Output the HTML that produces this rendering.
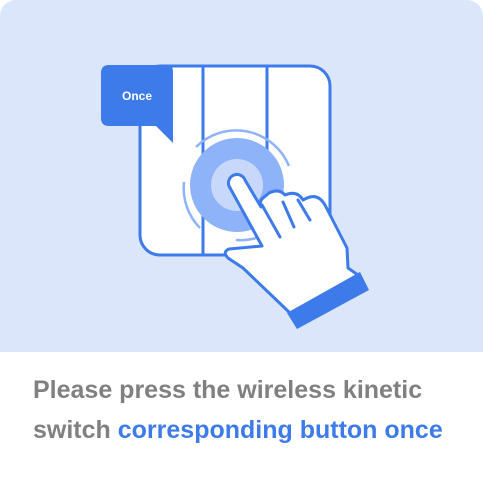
<!DOCTYPE html>
<html><head><meta charset="utf-8"><style>
html,body{margin:0;padding:0;background:#fff;}
body{width:483px;height:483px;position:relative;overflow:hidden;font-family:"Liberation Sans",sans-serif;}
.top{position:absolute;left:0;top:0;width:483px;height:352px;background:#dce6fa;border-radius:16px 16px 0 0;}
.t{position:absolute;left:33px;font-weight:bold;font-size:25px;line-height:29px;color:#808080;white-space:nowrap;}
.b{color:#3e7bea;}
</style></head><body>
<div class="top"></div>
<svg style="position:absolute;left:0;top:0" width="483" height="352" viewBox="0 0 483 352">
<rect x="140" y="66" width="190" height="189" rx="20" fill="#fff" stroke="#3e7bea" stroke-width="3"/>
<line x1="203" y1="66" x2="203" y2="255" stroke="#3e7bea" stroke-width="3"/>
<line x1="267" y1="66" x2="267" y2="255" stroke="#3e7bea" stroke-width="3"/>
<path d="M109,65 H168 Q173,65 173,72 V143 L156,126 H109 Q101,126 101,118 V73 Q101,65 109,65 Z" fill="#3e7bea"/>
<text x="137" y="100" font-family="Liberation Sans,sans-serif" font-weight="bold" font-size="12" fill="#fff" text-anchor="middle">Once</text>
<circle cx="237" cy="185" r="47" fill="#8fb3f9"/>
<circle cx="237" cy="185" r="26" fill="#c7d8fb"/>
<path d="M196,147 A57,57 0 0 1 289,166" fill="none" stroke="#8fb3f9" stroke-width="2.5"/>
<path d="M184,182 A57,57 0 0 0 200,228" fill="none" stroke="#8fb3f9" stroke-width="2.5"/>
<path d="M236,240 A57,57 0 0 0 262,236" fill="none" stroke="#8fb3f9" stroke-width="2.5"/>
<path d="M229,186 L262,246 L229,249 Q222,252 228,258 L243,268 L290,313 L358,275 L348,268 L347,248 L325,205 Q318,193 307,198 L303,200 Q297,190 285,195 Q279,188 269,193 L263,198 Q259,201 261,207 L245,180 A8,8 0 0 0 229,186 Z" fill="#fff" stroke="#3e7bea" stroke-width="3" stroke-linejoin="round"/>
<path d="M262,205 L280,237 M283,202 L294,227 M298,200 L310,220" stroke="#3e7bea" stroke-width="3" stroke-linecap="round"/>
<polygon points="287,313 297,329 369,290 360,272" fill="#3e7bea"/>
</svg>
<div class="t" style="top:376px">Please press the wireless kinetic</div>
<div class="t" style="top:416px">switch <span class="b">corresponding button once</span></div>
</body></html>
